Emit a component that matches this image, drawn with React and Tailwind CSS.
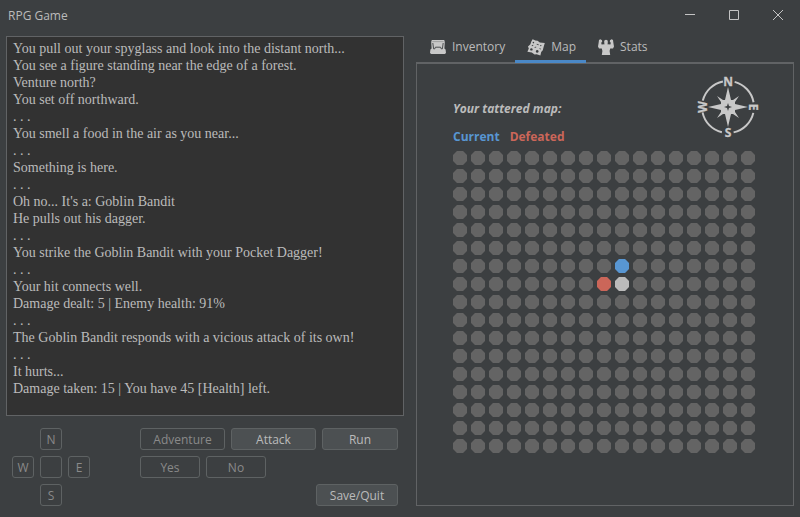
const LOG = [
  "You pull out your spyglass and look into the distant north...",
  "You see a figure standing near the edge of a forest.",
  "Venture north?",
  "You set off northward.",
  ". . .",
  "You smell a food in the air as you near...",
  ". . .",
  "Something is here.",
  ". . .",
  "Oh no... It's a: Goblin Bandit",
  "He pulls out his dagger.",
  ". . .",
  "You strike the Goblin Bandit with your Pocket Dagger!",
  ". . .",
  "Your hit connects well.",
  "Damage dealt: 5 | Enemy health: 91%",
  ". . .",
  "The Goblin Bandit responds with a vicious attack of its own!",
  ". . .",
  "It hurts...",
  "Damage taken: 15 | You have 45 [Health] left.",
];

const SIZE = 17;
const MARKS = { "6-9": "bg-[#5896d2]", "7-8": "bg-[#cb6659]", "7-9": "bg-[#bbbbbb]" };

function TitleBar() {
  return (
    <header className="flex h-[30px] items-center justify-between pl-2">
      <h1 className="pt-0.5 text-xs">RPG Game</h1>
      <div className="flex h-full">
        <button type="button" aria-label="Minimize" className="flex w-11 items-center justify-center">
          <svg width="10" height="10" viewBox="0 0 10 10" stroke="#c4c4c4"><path d="M0 4.5H10" /></svg>
        </button>
        <button type="button" aria-label="Maximize" className="flex w-11 items-center justify-center">
          <svg width="10" height="10" viewBox="0 0 10 10" stroke="#c4c4c4" fill="none"><path d="M.5 .5H9.5V9.5H.5Z" /></svg>
        </button>
        <button type="button" aria-label="Close" className="flex w-11 items-center justify-center">
          <svg width="10" height="10" viewBox="0 0 10 10" stroke="#c4c4c4"><path d="M0 0L10 10M10 0L0 10" /></svg>
        </button>
      </div>
    </header>
  );
}

function Btn({ children, className = "", disabled = false, label }) {
  const look = disabled ? "text-[#8a8a8a]" : "bg-[#4c5052] text-[#bbbbbb]";
  return (
    <button
      type="button"
      disabled={disabled}
      aria-label={label}
      className={`flex h-[22px] items-center justify-center rounded-[3px] border border-[#5e6263] pt-px ${look} ${className}`}
    >
      {children}
    </button>
  );
}

function Controls() {
  return (
    <div className="flex justify-between px-1.5">
      <div className="grid grid-cols-[22px_22px_22px] gap-1.5">
        <Btn disabled className="col-start-2">N</Btn>
        <Btn disabled className="col-start-1">W</Btn>
        <Btn disabled label="Stay" />
        <Btn disabled>E</Btn>
        <Btn disabled className="col-start-2">S</Btn>
      </div>
      <div className="flex flex-col gap-1.5">
        <div className="flex gap-1.5">
          <Btn disabled className="w-[85px]">Adventure</Btn>
          <Btn className="w-[85px]">Attack</Btn>
          <Btn className="w-[76px]">Run</Btn>
        </div>
        <div className="flex gap-1.5">
          <Btn disabled className="w-[60px]">Yes</Btn>
          <Btn disabled className="w-[60px]">No</Btn>
        </div>
        <Btn className="w-[82px] self-end">Save/Quit</Btn>
      </div>
    </div>
  );
}

function BagIcon() {
  return (
    <svg width="16" height="16" viewBox="0 0 16 16" fill="#c8c8c8">
      <path d="M1.8 1H14.2L14.8 3L14.4 9.6L15.6 10.4L16 14L14.8 15H1.2L0 14L.4 10.4L1.6 9.6L1.2 3Z" />
      <g fill="none" stroke="#3c3f41">
        <path d="M2.8 4L3.6 9.8H4.8L5.4 8.2H10.6L11.2 9.8H12.4L13.2 4" strokeWidth=".9" />
        <path d="M2.4 2.6H13.6" strokeWidth=".3" />
      </g>
    </svg>
  );
}

function MapIcon() {
  return (
    <svg width="18" height="17" viewBox="0 0 18 17" fill="#c8c8c8">
      <path d="M5.6 .2L8.4 1.6L10.6 1.8L12.8 3.4L17.8 4L16.6 8L15.8 11.2L14.2 13L13.4 16.6L9.6 15.2L7.6 15.6L4.8 13.4L.4 12.8L1.8 9.4L1 7.6L3.4 5.2L4.2 2.8Z" />
      <g fill="#3c3f41">
        <circle cx="6.4" cy="3.6" r=".8" />
        <circle cx="4.4" cy="10.4" r="1.2" />
        <circle cx="10.2" cy="12.4" r="1.3" />
        <circle cx="13.8" cy="6.6" r=".7" />
        <path d="M4.6 6.4L6 5.8L6.4 6.4L5 7.2ZM7.4 8.4L9 7.6L9.4 8.2L7.8 9ZM9.8 4.8L11.8 5.6L11.5 6.2L9.6 5.4ZM12.6 9.2L14 9.8L13.7 10.4L12.3 9.8Z" />
      </g>
    </svg>
  );
}

function StrongIcon() {
  return (
    <svg width="16" height="16" viewBox="0 0 16 16" fill="#c8c8c8">
      <ellipse cx="8" cy="3" rx="1.9" ry="2.3" />
      <path d="M1 1L2.4 .2L4 1.2L4.2 2.8L3.2 3.8L3.6 5.6L6.6 5.2V4H9.4V5.2L12.4 5.6L12.8 3.8L11.8 2.8L12 1.2L13.6 .2L15 1L15.4 4L16 7.4L15 9.4L12.2 9.4L11.6 12L12.2 16H3.8L4.4 12L3.8 9.4L1 9.4L0 7.4L.6 4Z" />
    </svg>
  );
}

const TABS = [
  { name: "Inventory", Icon: BagIcon },
  { name: "Map", Icon: MapIcon },
  { name: "Stats", Icon: StrongIcon },
];

function Tabs() {
  return (
    <div role="tablist" className="flex h-8 border-b-2 border-[#616365] px-0.5">
      {TABS.map(({ name, Icon }) => (
        <button
          key={name}
          type="button"
          role="tab"
          aria-selected={name === "Map"}
          className={`-mb-px flex items-center gap-1.5 border-b-3 pt-0.5 pr-2.5 pl-3 ${name === "Map" ? "border-[#4a88c7]" : "border-transparent"}`}
        >
          <Icon />
          {name}
        </button>
      ))}
    </div>
  );
}

function Compass() {
  return (
    <svg width="68" height="68" viewBox="-34 -34 68 68" fill="#c8c8c8" role="img" aria-label="Compass">
      <circle r="26" fill="none" stroke="#c8c8c8" strokeWidth="2" strokeDasharray="28.84 12" strokeDashoffset="-6" />
      <path d="M0 -20L3 -7L5 -7L11 -11L7 -5L7 -3L20 0L7 3L7 5L11 11L5 7L3 7L0 20L-3 7L-5 7L-11 11L-7 5L-7 3L-20 0L-7 -3L-7 -5L-11 -11L-5 -7L-3 -7Z" />
      <path d="M0 -4L1 -1L4 0L1 1L0 4L-1 1L-4 0L-1 -1Z" fill="#3c3f41" />
      <g fontSize="12" fontWeight="700" textAnchor="middle" stroke="#c8c8c8" strokeWidth=".3">
        <text y="-21">N</text>
        <text y="-21" transform="rotate(90)">E</text>
        <text y="30">S</text>
        <text y="-21" transform="rotate(-90)">W</text>
      </g>
    </svg>
  );
}

function WorldMap() {
  const cells = Array.from({ length: SIZE * SIZE }, (_, i) => `${Math.floor(i / SIZE)}-${i % SIZE}`);
  return (
    <section className="flex-1 border border-t-0 border-[#616365] px-9 pt-[9px] pb-9">
      <div className="flex w-[302px] items-end justify-between">
        <div className="flex flex-col gap-3 font-bold">
          <h2 className="italic leading-4">Your tattered map:</h2>
          <div className="flex gap-2.5 leading-4">
            <span className="text-[#5896d2]">Current</span>
            <span className="text-[#cb6659]">Defeated</span>
          </div>
        </div>
        <div className="-mr-[7px] mb-1"><Compass /></div>
      </div>
      <div className="mt-1.5 grid grid-cols-[repeat(17,14px)] gap-1">
        {cells.map((id) => (
          <span
            key={id}
            className={`h-3.5 [clip-path:polygon(28%_0,72%_0,100%_28%,100%_72%,72%_100%,28%_100%,0_72%,0_28%)] ${MARKS[id] || "bg-[#646464]"}`}
          />
        ))}
      </div>
    </section>
  );
}

export default function App() {
  return (
    <div className="flex min-h-screen flex-col bg-[#3c3f41] font-['Open_Sans',sans-serif] text-xs text-[#bbbbbb]">
      <TitleBar />
      <main className="grid flex-1 grid-cols-[398fr_378fr] gap-3 px-1.5 pb-[11px]">
        <div className="flex flex-col gap-3 pt-1.5">
          <div role="log" className="flex-1 border border-[#616365] bg-[#323232] px-1.5 pt-[3px] font-['Liberation_Serif',serif] text-sm leading-[17px]">
            {LOG.map((line, i) => (
              <p key={i}>{line}</p>
            ))}
          </div>
          <Controls />
        </div>
        <div className="flex flex-col pt-0.5">
          <Tabs />
          <WorldMap />
        </div>
      </main>
    </div>
  );
}
